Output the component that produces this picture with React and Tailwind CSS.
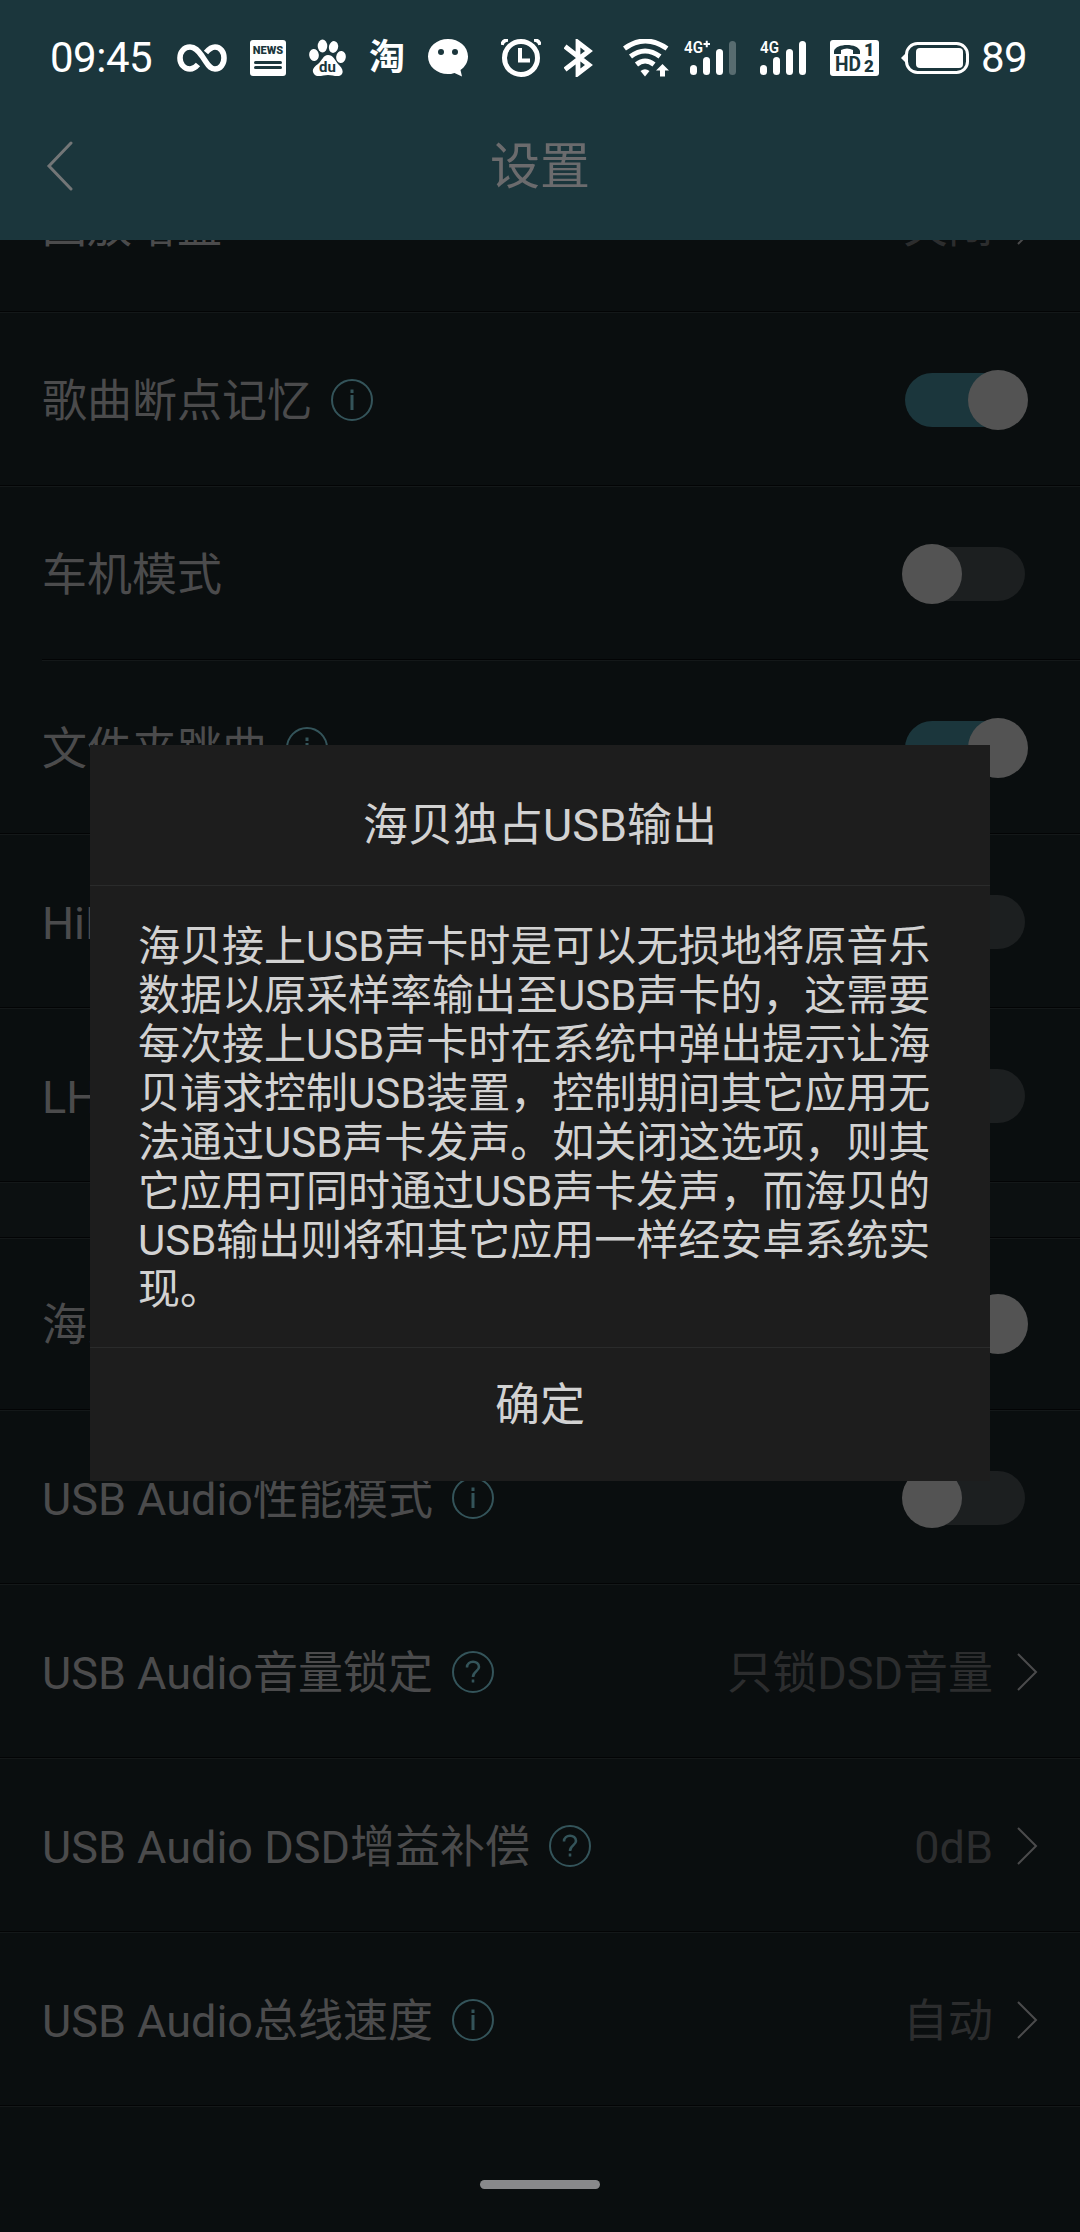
const FONT = "font-[Roboto,'Noto_Sans_CJK_SC',sans-serif]";

const topRows = [
    { label: '回放增益', value: '关闭' },
    { label: '歌曲断点记忆', hint: 'i', on: true },
    { label: '车机模式', on: false, inset: true },
    { label: '文件夹跳曲', hint: 'i', on: true },
    { label: 'HiByLink', on: false },
    { label: 'LHDC', on: false },
];

const usbRows = [
    { label: '海贝独占USB输出', hint: 'i', on: true },
    { label: 'USB Audio性能模式', hint: 'i', on: false },
    { label: 'USB Audio音量锁定', hint: '?', value: '只锁DSD音量' },
    { label: 'USB Audio DSD增益补偿', hint: '?', value: '0dB' },
    { label: 'USB Audio总线速度', hint: 'i', value: '自动' },
];

function StatusBar() {
    return (
        <div className="flex h-[116px] items-center pl-[50px] text-white">
            <span className="w-[108px] text-[42px] leading-none tracking-[-0.5px]">09:45</span>

            {/* infinity */}
            <svg className="ml-[19px] h-[28px] w-[50px]" viewBox="0 0 50 28" fill="none" stroke="#fff" strokeWidth="5.6">
                <path d="M21 20.5C18 24 16 25 13 25C7 25 3 20 3 14S7 3 13 3C18 3 21 6.500 25 12L29 18C32 22.500 34 25 38 25C43.500 25 47 20 47 14S43.500 3 38 3C34 3 32 5 29 8.500" />
            </svg>

            {/* news */}
            <div className="ml-[23px] flex h-9 w-9 flex-col items-center rounded-[3px] bg-white text-[#1b363c]">
                <span className="mt-[5px] text-[11px] leading-[12px] font-black">NEWS</span>
                <span className="mt-[4px] h-[3px] w-7 rounded bg-[#1b363c]" />
                <span className="mt-[2px] h-[3px] w-7 rounded bg-[#1b363c]" />
            </div>

            {/* baidu paw */}
            <svg className="ml-[23px] h-[38px] w-[37px]" viewBox="0 0 37 38" fill="#fff">
                <ellipse cx="13.500" cy="7" rx="4.800" ry="6.500" />
                <ellipse cx="24.500" cy="8" rx="4.600" ry="6" transform="rotate(12 24.5 8)" />
                <ellipse cx="5" cy="16" rx="4.800" ry="6" transform="rotate(-8 5 16)" />
                <ellipse cx="32" cy="18" rx="4.800" ry="6" transform="rotate(8 32 18)" />
                <path d="M19 16C24 16 26 21 29 25C32 28 35 31 33 35C30 39 24 36 19 36S8 39 5 35C2 31 5 28 9 25C13 22 14 16 19 16Z" />
                <text x="18.500" y="33" textAnchor="middle" fontSize="15" fontWeight="700" fill="#1b363c" fontFamily="Roboto">
                    du
                </text>
            </svg>

            <span className="ml-[23px] w-[39px] text-[36px] leading-none font-bold">淘</span>

            {/* wechat bubble */}
            <svg className="ml-5 h-[38px] w-[41px]" viewBox="0 0 41 38">
                <path fill="#fff" d="M20 0C31 0 40 7.500 40 17.500C40 23 37 28 32.500 31L34 37.500L26.500 34C24 35 22 35 20 35C9 35 0 27.500 0 17.500S9 0 20 0Z" />
                <circle cx="13" cy="13" r="3" fill="#1b363c" />
                <circle cx="27" cy="13" r="3" fill="#1b363c" />
            </svg>

            {/* alarm */}
            <svg className="ml-[32px] h-[38px] w-[40px]" viewBox="0 0 40 38" fill="none" stroke="#fff">
                <circle cx="20" cy="19" r="16.500" strokeWidth="5" />
                <path d="M19 9V21.500H29" strokeWidth="4" />
                <path d="M1 6Q2 1 7 1M39 6Q38 1 33 1" strokeWidth="3.500" />
            </svg>

            {/* bluetooth */}
            <svg className="ml-[23px] h-[38px] w-[29px]" viewBox="0 0 29 38" fill="none" stroke="#fff" strokeWidth="4.800">
                <path d="M1 7.500L25 26L14 34.500V3.500L25 12L1 30.500" />
            </svg>

            {/* wifi */}
            <svg className="ml-[30px] h-[38px] w-[46px]" viewBox="0 0 46 38" fill="none" stroke="#fff" strokeWidth="5">
                <path d="M1.500 9.500Q22 -5.500 44 9.500M7.500 17.500Q22 6.500 37 17.500M13.500 25.500Q22 18.500 31 25.500" />
                <path d="M22 37.500L17.500 32Q22 28.500 26.500 32Z" fill="#fff" stroke="none" />
                <path d="M39.500 25L46 31.500H42V37.500H37V31.500H33Z" fill="#fff" stroke="none" />
            </svg>

            {/* sim 1 */}
            <svg className="ml-[15px] h-[38px] w-[53px]" viewBox="0 0 53 38" fill="#fff">
                <text x="0" y="14" fontSize="16.500" fontWeight="600" fontFamily="Roboto" textLength="19" lengthAdjust="spacingAndGlyphs">4G</text>
                <path d="M19.500 5H26M22.750 1.800V8.200" stroke="#fff" strokeWidth="2" />
                <rect x="6" y="26" width="7" height="10" rx="3.500" />
                <rect x="19" y="18" width="7" height="18" rx="3.500" />
                <rect x="32" y="10" width="7" height="26" rx="3.500" />
                <rect x="45" y="2" width="7" height="34" rx="3.500" opacity=".27" />
            </svg>

            {/* sim 2 */}
            <svg className="ml-[23px] h-[38px] w-[47px]" viewBox="0 0 47 38" fill="#fff">
                <text x="0" y="14" fontSize="16.500" fontWeight="600" fontFamily="Roboto" textLength="19" lengthAdjust="spacingAndGlyphs">4G</text>
                <rect x="0" y="26" width="7" height="10" rx="3.500" />
                <rect x="13" y="18" width="7" height="18" rx="3.500" />
                <rect x="26" y="10" width="7" height="26" rx="3.500" />
                <rect x="39" y="2" width="7" height="34" rx="3.500" />
            </svg>

            {/* volte */}
            <svg className="ml-[23px] h-[36px] w-[49px]" viewBox="0 0 49 36" fill="#1b363c" fontFamily="Roboto" fontWeight="700">
                <rect width="49" height="36" rx="3" fill="#fff" />
                <path d="M4 14V11C6 3 28 3 30 11V14H23V10Q17 7 11 10V14Z" />
                <text x="5" y="31" fontSize="20" textLength="26" lengthAdjust="spacingAndGlyphs">HD</text>
                <text x="34" y="16" fontSize="18" fontWeight="900">1</text>
                <text x="34" y="32" fontSize="17" fontWeight="900">2</text>
            </svg>

            {/* battery */}
            <svg className="ml-[22px] h-[32px] w-[69px]" viewBox="0 0 69 32" fill="none">
                <rect x="5.500" y="1.500" width="61" height="29" rx="11" stroke="#fff" strokeWidth="3" />
                <path d="M6 10L0 16L6 22Z" fill="#fff" />
                <rect x="15" y="6" width="47" height="20" rx="4" fill="#fff" />
            </svg>
            <span className="ml-[11px] text-[42px] leading-none tracking-[-0.5px]">89</span>
        </div>
    );
}

function Hint({ type }) {
    return (
        <svg className="ml-[19px] h-[42px] w-[42px]" viewBox="0 0 42 42" fill="none" stroke="#34545a" strokeWidth="2">
            <circle cx="21" cy="21" r="20" />
            {type === 'i' ? (
                <path d="M21 16V31M21 10.500V14" strokeWidth="3" />
            ) : (
                <path d="M15 16.500C15 9 27 9 27 16C27 20 21 20.500 21 26M21 28.500V31.500" strokeWidth="2.600" />
            )}
        </svg>
    );
}

function Switch({ on }) {
    return (
        <div className="relative mr-[55px] h-[54px] w-[120px] rounded-full">
            <div className={'h-full w-full rounded-full ' + (on ? 'bg-[#1b363c]' : 'bg-[#1c1f20]')} />
            <div
                className={
                    'absolute -top-[3px] h-[60px] w-[60px] rounded-full bg-[#535353] ' + (on ? '-right-[3px]' : '-left-[3px]')
                }
            />
        </div>
    );
}

function Row({ label, hint, value, on, inset }) {
    return (
        <div className="flex h-[174px] flex-col">
            <div className="flex flex-1 items-center pt-[2px] pl-[42px]">
                <span className="pt-[2px] text-[45px] leading-none whitespace-nowrap text-[#4b4b4c]">{label}</span>
                {hint && <Hint type={hint} />}
                <div className="flex-1" />
                {value ? (
                    <>
                        <span className="pt-[2px] text-[45px] leading-none whitespace-nowrap text-[#2c2d2e]">{value}</span>
                        <svg className="mr-[42px] ml-[24px] h-[38px] w-[21px]" viewBox="0 0 21 38" fill="none" stroke="#4b4b4c" strokeWidth="2">
                            <path d="M1 1L19 19L1 37" />
                        </svg>
                    </>
                ) : (
                    <Switch on={on} />
                )}
            </div>
            <div className={'h-[2px] border-t border-[#030405] bg-[#141819] ' + (inset ? 'ml-[42px]' : '')} />
        </div>
    );
}

export default function App() {
    return (
        <div className={'relative flex h-[2232px] w-[1080px] flex-col overflow-hidden bg-[#0a0e0f] ' + FONT}>
            <header className="h-[240px] shrink-0 bg-[#1b363c]">
                <StatusBar />
                <div className="grid h-[100px] grid-cols-3 items-center">
                    <svg className="ml-[46px] h-[50px] w-[27px]" viewBox="0 0 27 50" fill="none" stroke="#737677" strokeWidth="3" strokeLinecap="round">
                        <path d="M25 2L3 25L25 48" />
                    </svg>
                    <h1 className="pt-[2px] text-center text-[50px] leading-none text-[#6b6b6d]">设置</h1>
                </div>
            </header>

            {/* list is scrolled, first row is half under the header */}
            <main className="min-h-0 flex-1 overflow-hidden">
                <div className="-mt-[101px]">
                    {topRows.map((r) => (
                        <Row key={r.label} {...r} />
                    ))}
                    <div className="-mb-[2px] flex h-[56px] flex-col justify-end bg-[#0c1011]">
                        <div className="h-[2px] border-t border-[#030405] bg-[#141819]" />
                    </div>
                    {usbRows.map((r) => (
                        <Row key={r.label} {...r} />
                    ))}
                </div>
            </main>

            <div className="absolute bottom-[43px] left-[480px] h-[9px] w-[120px] rounded-full bg-[#88898b]" />

            {/* dialog */}
            <div className="absolute top-[745px] left-[90px] flex h-[736px] w-[900px] flex-col bg-[#1d1d1d] text-[#d2d2d2]">
                <h2 className="flex h-[141px] items-center justify-center border-b border-[#2a2b2b] pt-[21px] text-[45px] leading-none">
                    海贝独占USB输出
                </h2>
                <p className="h-[462px] border-b border-[#2a2b2b] px-[48px] pt-[36px] text-[42px] leading-[49px]">
                    海贝接上USB声卡时是可以无损地将原音乐数据以原采样率输出至USB声卡的，这需要每次接上USB声卡时在系统中弹出提示让海贝请求控制USB装置，控制期间其它应用无法通过USB声卡发声。如关闭这选项，则其它应用可同时通过USB声卡发声，而海贝的USB输出则将和其它应用一样经安卓系统实现。
                </p>
                <button className="flex-1 pb-[19px] text-[45px] leading-none">确定</button>
            </div>
        </div>
    );
}
